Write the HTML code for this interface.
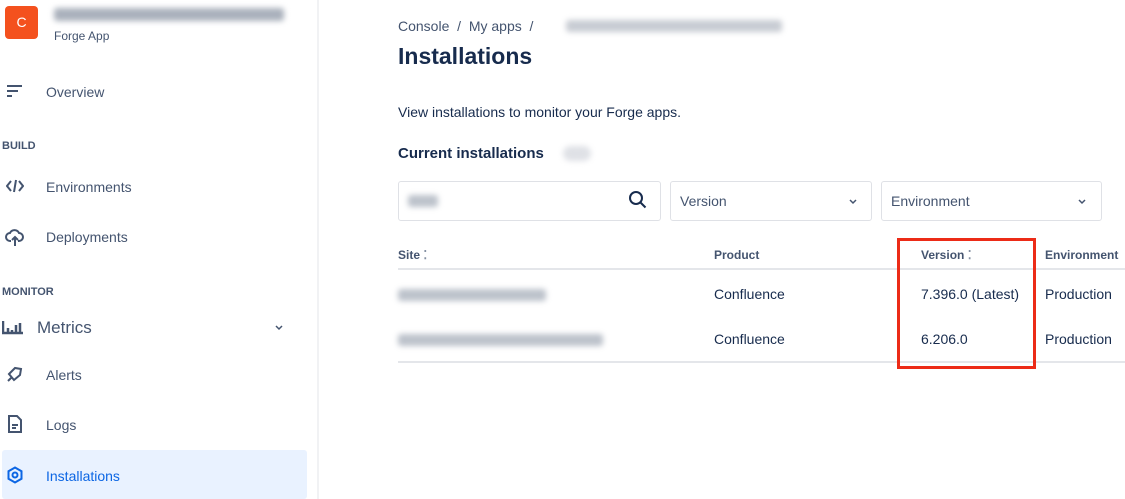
<!DOCTYPE html>
<html><head><style>
*{margin:0;padding:0;box-sizing:border-box}
body{width:1125px;height:499px;background:#fff;font-family:"Liberation Sans",sans-serif;color:#172b4d;position:relative;overflow:hidden}
.a{position:absolute;white-space:nowrap}
.nav{font-size:14px;color:#44546f}
.blur{position:absolute;background:#aab1bc;filter:blur(3px);border-radius:3px}
.sec{font-size:11px;font-weight:bold;color:#44546f}
.box{position:absolute;border:1px solid #dfe1e6;border-radius:3px;height:40px;top:181px}
.th{font-size:12px;font-weight:bold;color:#44546f;top:248px}
.td{font-size:14px;color:#172b4d}
</style></head><body>
<div class="a" style="left:5px;top:6px;width:33px;height:33px;background:#f4511e;border-radius:4px;color:#fff;font-size:14px;text-align:center;line-height:33px">C</div>
<div class="blur" style="left:54px;top:8px;width:230px;height:13px"></div>
<div class="a" style="left:54px;top:29px;font-size:12px;color:#44546f">Forge App</div>

<svg class="a" style="left:6px;top:84px" width="18" height="14"><path d="M1 2h15M1 7h11M1 12h5" stroke="#44546f" stroke-width="2" fill="none"/></svg>
<div class="a nav" style="left:46px;top:84px">Overview</div>
<div class="a sec" style="left:2px;top:140px">BUILD</div>
<svg class="a" style="left:6px;top:178px" width="18" height="16"><path d="M5 3L1 8l4 5M13 3l4 5-4 5M10 2L8 14" stroke="#44546f" stroke-width="2" fill="none"/></svg>
<div class="a nav" style="left:46px;top:179px">Environments</div>
<svg class="a" style="left:5px;top:227px" width="20" height="20"><path d="M6 14H5a4 4 0 010-8 5 5 0 019 0 4 4 0 010 8h-1M10 19V10M7 13l3-3 3 3" stroke="#44546f" stroke-width="2" fill="none"/></svg>
<div class="a nav" style="left:46px;top:229px">Deployments</div>
<div class="a sec" style="left:2px;top:286px">MONITOR</div>
<svg class="a" style="left:2px;top:319px" width="22" height="16"><path d="M1 2v12h20M6 9v4M10 11v2M14 6v7M18 4v9" stroke="#44546f" stroke-width="2.5" fill="none"/></svg>
<div class="a" style="left:37px;top:318px;font-size:17px;color:#44546f">Metrics</div>
<svg class="a" style="left:274px;top:324px" width="10" height="8"><path d="M2 2l3 3 3-3" stroke="#44546f" stroke-width="1.5" fill="none"/></svg>
<svg class="a" style="left:6px;top:365px" width="18" height="18"><path d="M3 9l6-6 6 1-1 6-6 5zM2 16l3-3" stroke="#44546f" stroke-width="2" fill="none"/></svg>
<div class="a nav" style="left:46px;top:367px">Alerts</div>
<svg class="a" style="left:8px;top:415px" width="14" height="18"><path d="M1 1h8l4 4v12H1zM4 10h6M4 13h4" stroke="#44546f" stroke-width="2" fill="none"/></svg>
<div class="a nav" style="left:46px;top:417px">Logs</div>
<div class="a" style="left:2px;top:450px;width:305px;height:49px;background:#e9f2ff;border-radius:3px"></div>
<svg class="a" style="left:6px;top:466px" width="18" height="18"><path d="M9 1.5l6.5 3.75v7.5L9 16.5 2.5 12.75v-7.5z" stroke="#0c66e4" stroke-width="2" fill="none"/><circle cx="9" cy="9" r="2.5" stroke="#0c66e4" stroke-width="2" fill="none"/></svg>
<div class="a" style="left:46px;top:468px;font-size:14px;color:#0c66e4">Installations</div>
<div class="a" style="left:317px;top:0;width:2px;height:499px;background:#f1f2f4"></div>

<div class="a nav" style="left:398px;top:18px">Console &nbsp;/&nbsp; My apps &nbsp;/</div>
<div class="blur" style="left:566px;top:20px;width:216px;height:12px;background:#c8ccd3"></div>
<div class="a" style="left:398px;top:43px;font-size:23px;font-weight:bold">Installations</div>
<div class="a" style="left:398px;top:104px;font-size:14px">View installations to monitor your Forge apps.</div>
<div class="a" style="left:398px;top:145px;font-size:15px;font-weight:bold">Current installations</div>
<div class="blur" style="left:563px;top:146px;width:28px;height:15px;background:#dfe1e6;border-radius:8px"></div>

<div class="box" style="left:398px;width:263px"></div>
<div class="blur" style="left:408px;top:195px;width:30px;height:12px;background:#bcc2cb"></div>
<svg class="a" style="left:628px;top:190px" width="20" height="20"><circle cx="8" cy="8" r="6" stroke="#172b4d" stroke-width="2" fill="none"/><path d="M12.5 12.5l5 5" stroke="#172b4d" stroke-width="2"/></svg>
<div class="box" style="left:670px;width:202px"></div>
<div class="a" style="left:680px;top:193px;font-size:14px;color:#44546f">Version</div>
<svg class="a" style="left:848px;top:198px" width="10" height="8"><path d="M2 2l3 3 3-3" stroke="#44546f" stroke-width="1.5" fill="none"/></svg>
<div class="box" style="left:881px;width:221px"></div>
<div class="a" style="left:891px;top:193px;font-size:14px;color:#44546f">Environment</div>
<svg class="a" style="left:1077px;top:198px" width="10" height="8"><path d="M2 2l3 3 3-3" stroke="#44546f" stroke-width="1.5" fill="none"/></svg>

<div class="a th" style="left:398px">Site <span style="color:#8590a2">⁚</span></div>
<div class="a th" style="left:714px">Product</div>
<div class="a th" style="left:921px">Version <span style="color:#8590a2">⁚</span></div>
<div class="a th" style="left:1045px">Environment</div>
<div class="a" style="left:398px;top:268px;width:727px;height:2px;background:#e4e6ea"></div>
<div class="blur" style="left:398px;top:289px;width:148px;height:12px;background:#bcc2cb"></div>
<div class="a td" style="left:714px;top:286px">Confluence</div>
<div class="a td" style="left:921px;top:286px">7.396.0 (Latest)</div>
<div class="a td" style="left:1045px;top:286px">Production</div>
<div class="blur" style="left:398px;top:334px;width:205px;height:12px;background:#bcc2cb"></div>
<div class="a td" style="left:714px;top:331px">Confluence</div>
<div class="a td" style="left:921px;top:331px">6.206.0</div>
<div class="a td" style="left:1045px;top:331px">Production</div>
<div class="a" style="left:398px;top:361px;width:727px;height:2px;background:#e4e6ea"></div>
<div class="a" style="left:897px;top:238px;width:139px;height:131px;border:3px solid #ec2b17"></div>
</body></html>
